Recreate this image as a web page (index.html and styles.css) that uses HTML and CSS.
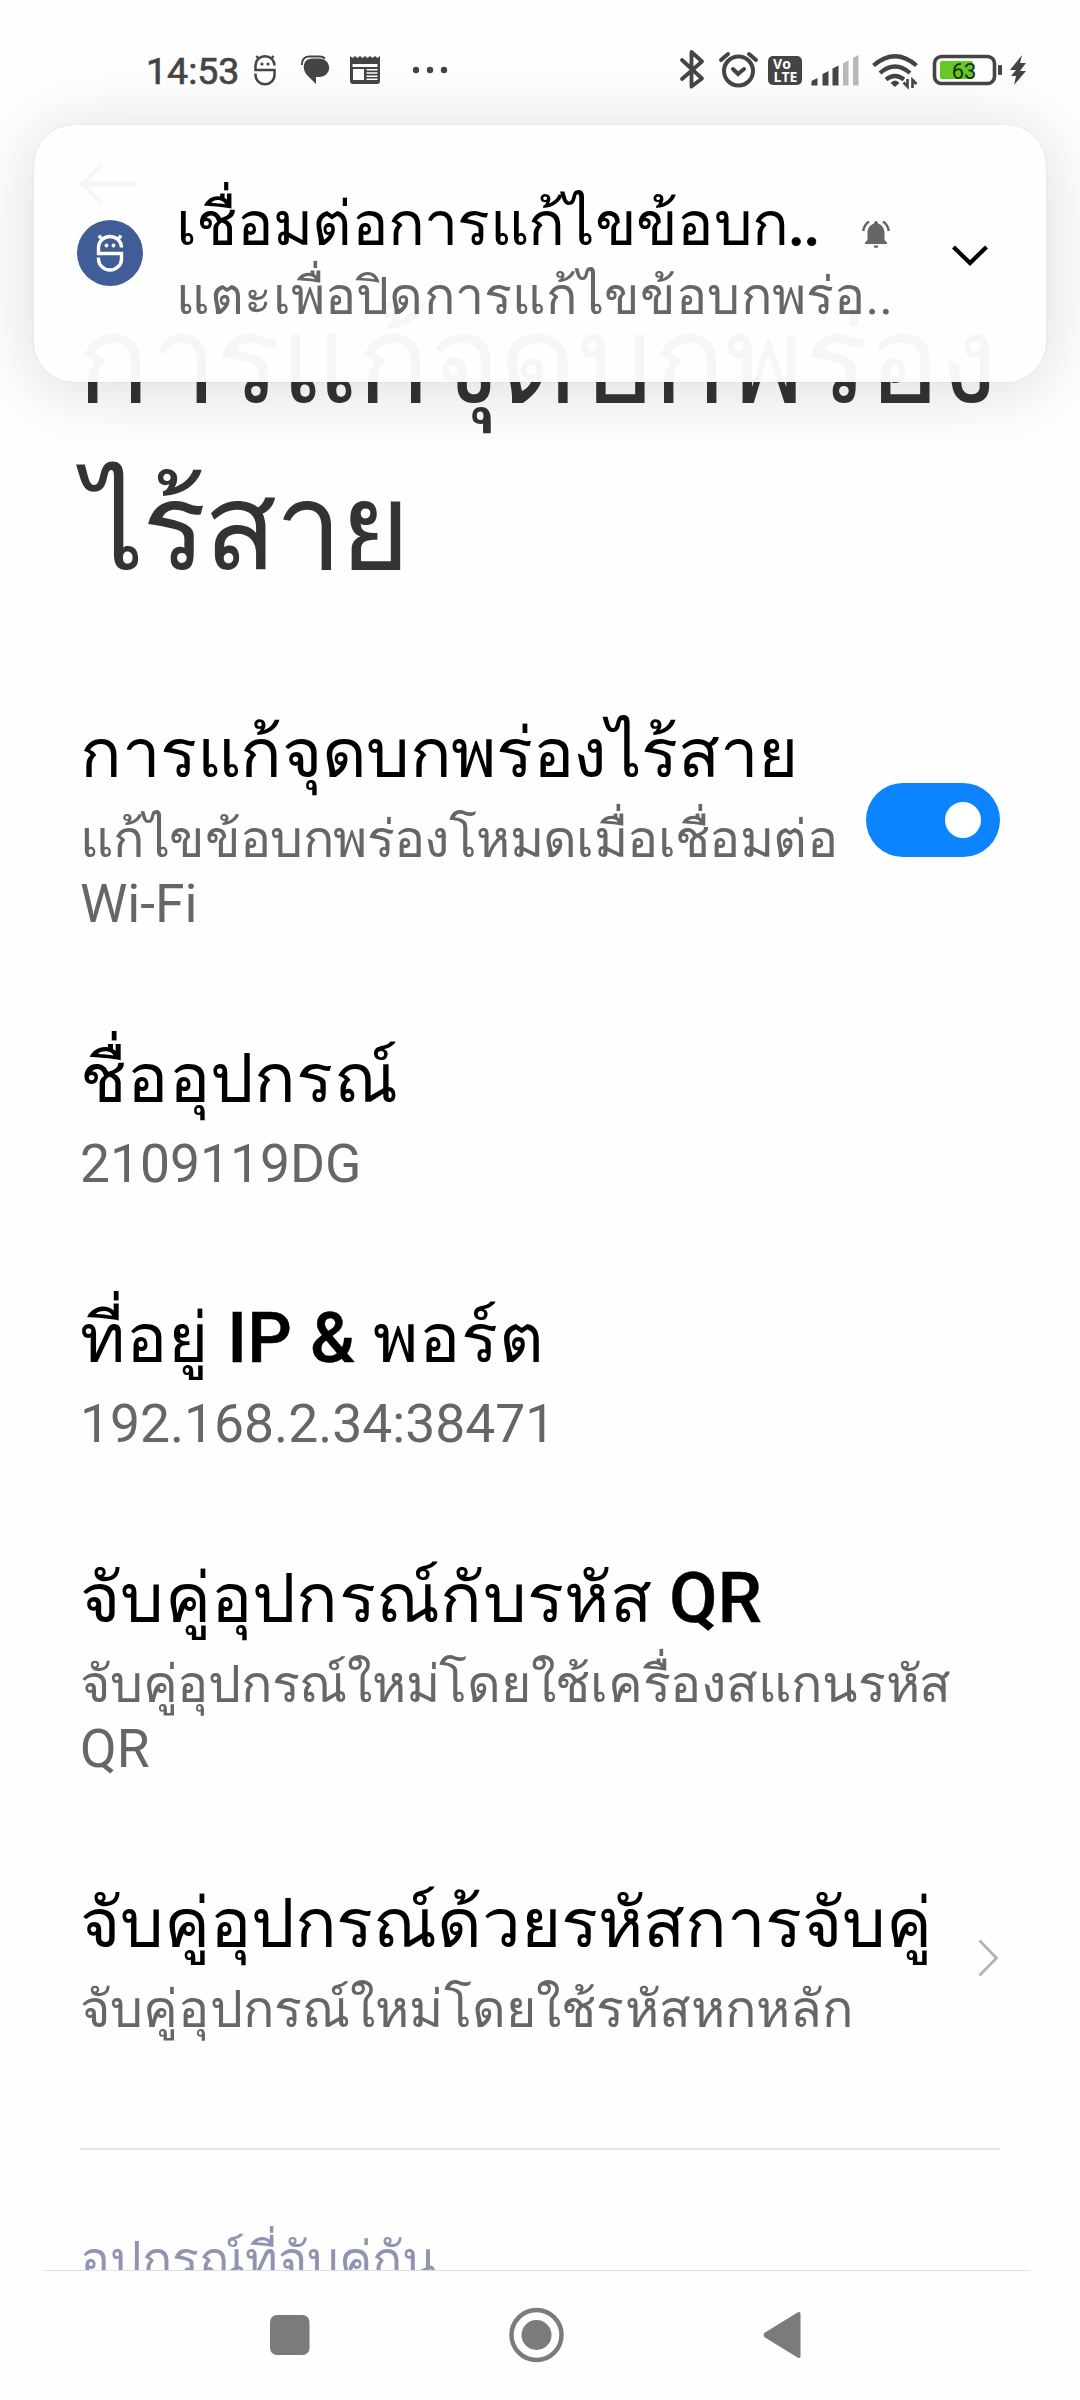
FILE: index.html
```
<!DOCTYPE html>
<html lang="th">
<head>
<meta charset="utf-8">
<title>การแก้จุดบกพร่องไร้สาย</title>
<link rel="stylesheet" href="styles.css">
</head>
<body>
<div class="screen">
  <header class="status">
    <div class="status-left">
      <span class="clock">14:53</span>
      <svg class="i-bug" width="24" height="32" viewBox="0 0 24 32" fill="none" stroke="#444" stroke-width="2.5"><path d="M3.500 2l2.500 3M20.500 2l-2.500 3M21.500 11.500a9.500 9.300 0 0 0-19 0V16H21.500V21a9.500 9.300 0 0 1-19 0V19.500"/><circle cx="9" cy="10" r="1.600" fill="#444" stroke="none"/><circle cx="15" cy="10" r="1.600" fill="#444" stroke="none"/></svg>
      <svg class="i-chat" width="30" height="30" viewBox="0 0 30 30"><path d="M2 10C1.500 5 4.500 1.500 9 1.500H20Q23 1.500 25 3.500" fill="none" stroke="#444" stroke-width="2"/><path d="M12 3.500H20A8.500 8.500 0 0 1 20 22H16V29L6.500 19.500C1.500 13 3.500 3.500 12 3.500Z" fill="#444"/></svg>
      <svg class="i-news" width="32" height="30" viewBox="0 0 32 30"><path d="M1 1l2.500 2L6 1l2.500 2L11 1l2.500 2L16 1l2.500 2L21 1l2.500 2L26 1l2.500 2L31 1V26q0 3-3 3H4q-3 0-3-3Z" fill="#444"/><path d="M3.500 9H28.500V12H3.500ZM4 14H15V25H4ZM17.500 14H28.500V15.500H17.500ZM17.500 17.200H28.500V18.700H17.500ZM17.500 20.400H28.500V21.900H17.500ZM17.500 23.600H28.500V25H17.500Z" fill="#fff"/></svg>
      <svg class="i-dots" width="36" height="8" viewBox="0 0 36 8" fill="#444"><circle cx="4" cy="4" r="3.200"/><circle cx="18" cy="4" r="3.200"/><circle cx="32" cy="4" r="3.200"/></svg>
    </div>
    <svg class="status-right" width="380" height="50" viewBox="670 45 380 50" fill="none" stroke="#444">
      <path d="M682 60L702 78.500 691.500 86.500V52L702 61.500 682 79" stroke-width="3.800" stroke-linejoin="round" stroke-linecap="round"/>
      <circle cx="738.500" cy="71" r="14.500" stroke-width="4"/><path d="M733 69l5 5 6-5" stroke-width="4" stroke-linecap="round"/><path d="M721 60l7-6M756 60l-7-6" stroke-width="4" stroke-linecap="round"/>
      <rect x="768" y="56" width="34" height="29" rx="5" fill="#444" stroke="none"/>
      <text x="782" y="69" class="volte">Vo</text><text x="785.500" y="81.500" class="volte">LTE</text>
      <g stroke="none" fill="#444"><path d="M811.500 85.500V81l6-3v7.500ZM822.500 85.500V74l6-3v14.500ZM832.500 85.500V68.500l6-3v20Z"/><path fill="#b8b8b8" d="M843 85.500V63.500l5.500-3v25ZM853 85.500V58l5.500-3v30.500Z"/></g>
      <g stroke-width="4.200"><path d="M873.500 65.500Q895 47 916.500 65.500M880 73Q895 60 910 73M886 79.500Q895 72.500 904 79.500"/></g>
      <path d="M890.500 83Q895 78 899.500 83L895 87Z" fill="#444" stroke="none"/>
      <path d="M907.500 79V86.500l-4-4M912.500 88V80l4 4" stroke-width="2.600"/>
      <rect x="934.500" y="56.500" width="60" height="27" rx="7" stroke-width="3.600"/>
      <rect x="940" y="61" width="33" height="18" rx="2" fill="#65c728" stroke="none"/>
      <rect x="998" y="65" width="4" height="10" rx="1" fill="#444" stroke="none"/>
      <text x="964" y="78.500" class="batt">63</text>
      <path d="M1022 55L1010 70H1016L1011 76H1016L1014 85L1026 71H1020L1026 63H1020Z" fill="#444" stroke="none"/>
    </svg>
  </header>

  <main class="page">
    <svg class="back" width="58" height="40" viewBox="0 0 58 40" fill="none" stroke="#333" stroke-width="4"><path d="M56 20H3M21 1L2 20l19 19"/></svg>
    <h1 class="heading"><span class="h-first">การแก้จุดบกพร่อง</span><span class="h-second">ไร้สาย</span></h1>
    <section class="item">
      <div class="texts"><h2 class="name tight">การแก้จุดบกพร่องไร้สาย</h2><p class="desc tight">แก้ไขข้อบกพร่องโหมดเมื่อเชื่อมต่อ<br><span class="lat">Wi-Fi</span></p></div>
      <span class="toggle"><span class="knob"></span></span>
    </section>
    <section class="item"><div class="texts"><h2 class="name medium">ชื่ออุปกรณ์</h2><p class="desc"><span class="lat">2109119DG</span></p></div></section>
    <section class="item"><div class="texts"><h2 class="name loose">ที่อยู่ <b>IP &amp;</b> พอร์ต</h2><p class="desc"><span class="lat">192.168.2.34:38471</span></p></div></section>
    <section class="item"><div class="texts"><h2 class="name medium">จับคู่อุปกรณ์กับรหัส <b>QR</b></h2><p class="desc snug">จับคู่อุปกรณ์ใหม่โดยใช้เครื่องสแกนรหัส<br><span class="lat">QR</span></p></div></section>
    <section class="item">
      <div class="texts"><h2 class="name snug">จับคู่อุปกรณ์ด้วยรหัสการจับคู่</h2><p class="desc wide">จับคู่อุปกรณ์ใหม่โดยใช้รหัสหกหลัก</p></div>
      <svg class="next" width="22" height="38" viewBox="0 0 22 38" fill="none" stroke="#b3b3b3" stroke-width="2.800"><path d="M1.500 1.500L18.500 19 1.500 36.500"/></svg>
    </section>
    <hr class="rule">
    <p class="group">อุปกรณ์ที่จับคู่กัน</p>
  </main>

  <nav class="nav">
    <svg class="navicons" width="1080" height="130" viewBox="0 2270 1080 130" fill="#7b7b7b"><rect x="270" y="2315" width="39.500" height="40" rx="7"/><circle cx="536.500" cy="2335" r="25" fill="none" stroke="#7b7b7b" stroke-width="4.500"/><circle cx="536.500" cy="2335" r="15"/><path d="M765 2332.500L797.500 2312.500Q800.500 2311 800.500 2314V2356Q800.500 2359 797.500 2357.500L765 2337.500Q762 2335 765 2332.500Z"/></svg>
  </nav>

  <aside class="toast">
    <svg class="avatar" width="66" height="66" viewBox="0 0 66 66"><circle cx="33" cy="33" r="33" fill="#405d97"/><g fill="none" stroke="#fff" stroke-width="3.400"><path d="M22 15.500l2.500 3.500M44 15.500l-2.500 3.500M44.500 27.500a11.500 11 0 0 0-23 0V33.500H44.500V39a11.500 11 0 0 1-23 0V37.500"/></g><circle cx="29.500" cy="25.500" r="1.900" fill="#fff"/><circle cx="36.500" cy="25.500" r="1.900" fill="#fff"/></svg>
    <div class="toast-text">
      <div class="toast-title">เชื่อมต่อการแก้ไขข้อบก<b>..</b></div>
      <div class="toast-desc">แตะเพื่อปิดการแก้ไขข้อบกพร่อ..</div>
    </div>
    <svg class="bell" width="28" height="28" viewBox="0 0 28 28" fill="#666"><path d="M3 24V22.500l2.500-2.500V13C5.500 8 8.500 4.500 12 3.500 12 0 16 0 16 3.500c3.500 1 6.500 4.500 6.500 9.500v7l2.500 2.500V24ZM11.500 25.500h5q-.5 2.500-2.500 2.500t-2.500-2.500Z"/><path d="M7 1.500Q2 5 1.300 11M21 1.500Q26 5 26.700 11" fill="none" stroke="#666" stroke-width="2.400"/></svg>
    <svg class="chev" width="38" height="24" viewBox="0 0 38 24" fill="none" stroke="#000" stroke-width="4.200"><path d="M2.500 3L19 19 35.500 3"/></svg>
  </aside>
</div>
</body>
</html>
```
FILE: styles.css
```
* { margin: 0; padding: 0; box-sizing: border-box; }
body { background: #fefefe; font-family: Roboto, sans-serif; }
.screen { position: relative; width: 1080px; height: 2400px; overflow: hidden; display: flex; flex-direction: column; background: #fefefe; }
.status { height: 140px; flex: none; padding: 45px 30px 0 146px; display: flex; justify-content: space-between; align-items: flex-start; position: relative; z-index: 3; }
.status-left { display: flex; align-items: center; height: 50px; }
.clock { font-size: 37.500px; font-weight: 400; -webkit-text-stroke: .7px #444; line-height: 50px; padding-top: 2px; color: #444; width: 93px; white-space: nowrap; }
.i-bug { margin-left: 14px; }
.i-chat { margin-left: 23px; }
.i-news { margin-left: 19px; }
.i-dots { margin-left: 31px; }
.volte { font: 700 14px "Open Sans", sans-serif; fill: #fff; stroke: none; text-anchor: middle; }
.batt { font: 400 22px Roboto, sans-serif; fill: #173500; stroke: none; text-anchor: middle; }

.page { height: 2130px; flex: none; padding: 24px 80px 0; overflow: hidden; }
.back { display: block; }
.heading { display: flex; flex-direction: column; font-size: 120px; font-weight: 400; line-height: 167px; color: #333; margin-top: 74px; white-space: nowrap; }
.h-first { letter-spacing: -.3px; margin-left: -3px; }
.h-second { letter-spacing: -2px; margin-left: 4px; }
.item { display: flex; align-items: center; justify-content: space-between; margin-top: 98px; }
.name { font-size: 69px; font-weight: 400; line-height: 88px; color: #000; white-space: nowrap; }
.name b { font-size: 70px; font-weight: 500; line-height: 1; letter-spacing: .3px; -webkit-text-stroke: .5px #000; }
.name.tight { letter-spacing: -.4px; }
.name.snug { letter-spacing: -.1px; }
.name.medium { letter-spacing: .3px; }
.name.loose { letter-spacing: 1px; }
.desc { font-size: 52px; line-height: 65px; color: #666; margin-top: 9px; white-space: nowrap; }
.desc.tight { letter-spacing: -.6px; }
.desc.snug { letter-spacing: -.25px; }
.desc.wide { letter-spacing: .15px; }
.desc .lat { font-size: 53.400px; line-height: 1; letter-spacing: 0; }
.toggle { flex: none; width: 134px; height: 74px; margin-bottom: 7px; border-radius: 37px; background: #0d84ff; display: flex; align-items: center; justify-content: flex-end; padding-right: 19px; }
.knob { width: 36px; height: 36px; border-radius: 50%; background: #fff; }
.next { flex: none; margin-bottom: 6px; }
.rule { border: 0; height: 2px; background: #e6e6e6; margin-top: 106px; }
.group { font-size: 50px; line-height: 60px; color: #8f95b0; margin-top: 80px; white-space: nowrap; }

.nav { height: 130px; flex: none; background: #fefefe; position: relative; }
.nav::before { content: ""; position: absolute; left: 43px; right: 50px; top: 0; height: 1px; background: #e0e0e0; }
.navicons { display: block; }

.toast { position: absolute; z-index: 2; left: 34px; top: 125px; width: 1012px; height: 257px; border-radius: 40px; background: rgba(254,254,254,.965); box-shadow: 0 0 1px rgba(0,0,0,.3), 0 6px 70px rgba(0,0,0,.14); padding-left: 43px; display: flex; align-items: center; }
.avatar { flex: none; margin-bottom: 1px; }
.toast-text { width: 681px; flex: none; margin-left: 33px; padding-top: 10px; }
.toast-title { font-size: 61px; line-height: 76px; color: #000; white-space: nowrap; letter-spacing: -.7px; }
.toast-title b { font-weight: 500; line-height: 1; letter-spacing: -1.500px; -webkit-text-stroke: .8px #000; }
.toast-desc { font-size: 52px; line-height: 68px; margin-top: 1px; color: #666; white-space: nowrap; letter-spacing: .2px; }
.bell { flex: none; margin-left: 5px; margin-bottom: 39px; }
.chev { flex: none; margin-left: 61px; margin-top: 4px; }
```
